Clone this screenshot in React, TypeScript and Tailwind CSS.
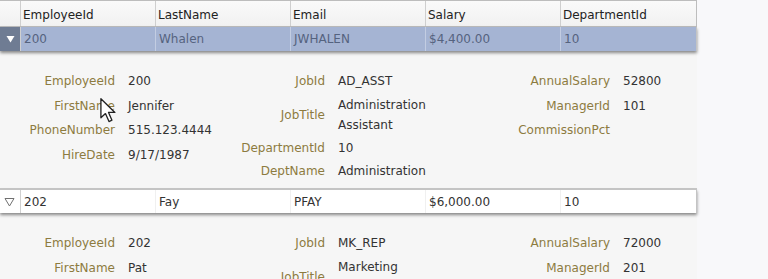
import React from 'react';

interface Employee {
  employeeId: number;
  lastName: string;
  email: string;
  salary: string;
  departmentId: number;
  firstName: string;
  phoneNumber: string;
  hireDate: string;
  jobId: string;
  jobTitle: string[];
  deptName: string;
  annualSalary: number;
  managerId: number;
}

const employees: Employee[] = [
  {
    employeeId: 200,
    lastName: 'Whalen',
    email: 'JWHALEN',
    salary: '$4,400.00',
    departmentId: 10,
    firstName: 'Jennifer',
    phoneNumber: '515.123.4444',
    hireDate: '9/17/1987',
    jobId: 'AD_ASST',
    jobTitle: ['Administration', 'Assistant'],
    deptName: 'Administration',
    annualSalary: 52800,
    managerId: 101,
  },
  {
    employeeId: 202,
    lastName: 'Fay',
    email: 'PFAY',
    salary: '$6,000.00',
    departmentId: 10,
    firstName: 'Pat',
    phoneNumber: '603.123.6666',
    hireDate: '8/17/1997',
    jobId: 'MK_REP',
    jobTitle: ['Marketing', 'Representative'],
    deptName: 'Marketing',
    annualSalary: 72000,
    managerId: 201,
  },
];

const gridCols = 'grid grid-cols-[21px_135px_135px_135px_135px_136px]';

const Label: React.FC<{ children: React.ReactNode }> = ({ children }) => (
  <span className="text-[#8d7b3f]">{children}</span>
);

const Field: React.FC<{ label: string; value?: React.ReactNode; labelW: string; h?: string }> = ({
  label,
  value,
  labelW,
  h = 'h-[24px]',
}) => (
  <div className={`flex items-center ${h}`}>
    <div className={`${labelW} text-right pr-[13px] shrink-0`}>
      <Label>{label}</Label>
    </div>
    <div className="text-[#333] whitespace-nowrap">{value}</div>
  </div>
);

const Detail: React.FC<{ emp: Employee }> = ({ emp }) => (
  <div className="h-[138px] pt-[18px] border-b border-[#c9c9c9] bg-[#f6f6f6] flex">
    <div className="w-[230px] flex flex-col">
      <Field labelW="w-[128px]" label="EmployeeId" value={emp.employeeId} h="h-[24.5px]" />
      <Field labelW="w-[128px]" label="FirstName" value={emp.firstName} h="h-[24.5px]" />
      <Field labelW="w-[128px]" label="PhoneNumber" value={emp.phoneNumber} h="h-[24.5px]" />
      <Field labelW="w-[128px]" label="HireDate" value={emp.hireDate} h="h-[24.5px]" />
    </div>
    <div className="w-[200px] flex flex-col">
      <Field labelW="w-[108px]" label="JobId" value={emp.jobId} />
      <div className="flex items-center h-[43px] pt-[1px]">
        <div className="w-[108px] text-right pr-[13px] shrink-0">
          <Label>JobTitle</Label>
        </div>
        <div className="text-[#333] leading-[20px]">
          {emp.jobTitle.map((l) => (
            <div key={l}>{l}</div>
          ))}
        </div>
      </div>
      <Field labelW="w-[108px]" label="DepartmentId" value={emp.departmentId} h="h-[23.5px]" />
      <Field labelW="w-[108px]" label="DeptName" value={emp.deptName} h="h-[23.5px]" />
    </div>
    <div className="flex-1 flex flex-col">
      <Field labelW="w-[193px]" label="AnnualSalary" value={emp.annualSalary} h="h-[24.5px]" />
      <Field labelW="w-[193px]" label="ManagerId" value={emp.managerId} h="h-[24.5px]" />
      <Field labelW="w-[193px]" label="CommissionPct" h="h-[24.5px]" />
    </div>
  </div>
);

const Row: React.FC<{ emp: Employee; selected: boolean }> = ({ emp, selected }) => {
  const cell = selected
    ? 'pl-[3px] flex items-center border-r border-[#c3cde2]'
    : 'pl-[3px] flex items-center border-r border-[#f0f0f0]';
  return (
    <div
      className={`${gridCols} h-[24px] relative z-10 shadow-[0_2px_3px_rgba(0,0,0,0.45)] ${
        selected ? 'bg-[#a5b4d3] text-[#55637f]' : 'bg-white text-[#333] border-t border-[#c4c4c4] h-[24px]'
      }`}
    >
      <div
        className={`flex items-center justify-center ${
          selected ? 'bg-[#6f7c93] text-white' : 'bg-white text-[#777]'
        } border-r border-[#d0d0d0]`}
      >
        {selected ? (
          <svg width="9" height="8" viewBox="0 0 9 8">
            <path d="M0.5 1 L8.5 1 L4.5 7.5 Z" fill="#ffffff" />
          </svg>
        ) : (
          <svg width="11" height="10" viewBox="0 0 11 10" className="-ml-[2px]">
            <path d="M1 1.5 L10 1.5 L5.5 9 Z" fill="none" stroke="#707070" strokeWidth="1" />
          </svg>
        )}
      </div>
      <div className={cell}>{emp.employeeId}</div>
      <div className={cell}>{emp.lastName}</div>
      <div className={cell}>{emp.email}</div>
      <div className={cell}>{emp.salary}</div>
      <div className="pl-[3px] flex items-center border-r border-[#c4c4c4]">{emp.departmentId}</div>
    </div>
  );
};

const App: React.FC = () => {
  const headers = ['EmployeeId', 'LastName', 'Email', 'Salary', 'DepartmentId'];
  return (
    <div className="w-[768px] h-[279px] overflow-hidden bg-[#f8f8fa] relative font-['DejaVu_Sans',sans-serif] text-[12px]">
      <div className="w-[697px]">
        {/* Header */}
        <div className={`${gridCols} h-[27px] border-t border-b border-[#bdbdbd] bg-gradient-to-b from-[#fafafa] to-[#f1f1f1] text-[#222]`}>
          <div className="border-r border-[#cfcfcf]" />
          {headers.map((h, i) => (
            <div
              key={h}
              className={`pl-[2px] pt-[2px] flex items-center border-[#cfcfcf] ${
                i === headers.length - 1 ? 'border-r border-r-[#bdbdbd]' : 'border-r'
              }`}
            >
              {h}
            </div>
          ))}
        </div>

        <Row emp={employees[0]} selected />
        <Detail emp={employees[0]} />
        <Row emp={employees[1]} selected={false} />
        <Detail emp={employees[1]} />
      </div>

      {/* mouse pointer */}
      <svg
        className="absolute left-[100px] top-[98px]"
        width="18"
        height="25"
        viewBox="0 0 12 17"
      >
        <path
          d="M0.5 0.5 L0.5 13.5 L3.6 10.6 L6 16 L8 15.1 L5.7 9.8 L10 9.8 Z"
          fill="#ffffff"
          stroke="#222222"
          strokeWidth="0.9"
          strokeLinejoin="round"
        />
      </svg>
    </div>
  );
};

export default App;
